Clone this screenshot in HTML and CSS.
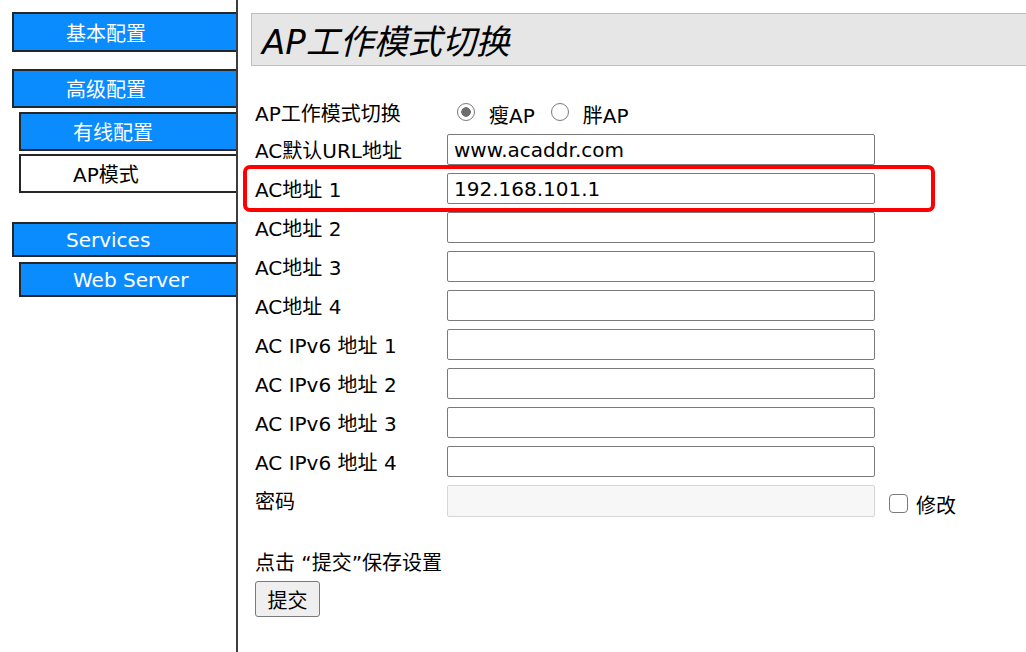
FILE: index.html
```html
<!DOCTYPE html>
<html lang="zh-CN">
<head>
<meta charset="utf-8">
<title>AP工作模式切换</title>
<link rel="stylesheet" href="styles.css">
</head>
<body>
<div class="page">
  <aside class="sidebar">
    <div class="nav-item nav-top nav-first">基本配置</div>
    <div class="nav-item nav-top nav-group">高级配置</div>
    <div class="nav-item nav-sub nav-s1">有线配置</div>
    <div class="nav-item nav-sub nav-active">AP模式</div>
    <div class="nav-item nav-top nav-short nav-svc">Services</div>
    <div class="nav-item nav-sub nav-short">Web Server</div>
  </aside>
  <main class="main">
    <h1 class="title">AP工作模式切换</h1>
    <form class="form">
      <div class="label label-radio">AP工作模式切换</div>
      <div class="radios">
        <label class="radio-opt"><input type="radio" name="mode" class="radio" checked><span>瘦AP</span></label>
        <label class="radio-opt"><input type="radio" name="mode" class="radio"><span>胖AP</span></label>
      </div>
      <div></div>

      <div class="label">AC默认URL地址</div>
      <input class="field" type="text" value="www.acaddr.com">
      <div></div>

      <div class="label">AC地址 1</div>
      <input class="field" type="text" value="192.168.101.1">
      <div></div>

      <div class="label">AC地址 2</div>
      <input class="field" type="text">
      <div></div>

      <div class="label">AC地址 3</div>
      <input class="field" type="text">
      <div></div>

      <div class="label">AC地址 4</div>
      <input class="field" type="text">
      <div></div>

      <div class="label">AC IPv6 地址 1</div>
      <input class="field" type="text">
      <div></div>

      <div class="label">AC IPv6 地址 2</div>
      <input class="field" type="text">
      <div></div>

      <div class="label">AC IPv6 地址 3</div>
      <input class="field" type="text">
      <div></div>

      <div class="label">AC IPv6 地址 4</div>
      <input class="field" type="text">
      <div></div>

      <div class="label">密码</div>
      <input class="field field-disabled" type="password" disabled>
      <label class="check-opt"><input type="checkbox" class="check"><span>修改</span></label>
    </form>
    <p class="hint">点击 “提交”保存设置</p>
    <button class="submit" type="button">提交</button>
  </main>
  <div class="highlight"></div>
</div>
</body>
</html>
```
FILE: styles.css
```css
* { box-sizing: border-box; }

html, body {
  margin: 0;
  padding: 0;
  background: #fff;
}

body {
  font-family: "DejaVu Sans", "Noto Sans CJK SC", sans-serif;
  font-size: 20px;
  color: #000;
}

.page {
  position: relative;
  display: flex;
  width: 1026px;
  height: 652px;
  overflow: hidden;
}

/* ---------- sidebar ---------- */
.sidebar {
  flex: 0 0 238px;
  display: flex;
  flex-direction: column;
  align-items: stretch;
  padding-top: 12px;
  border-right: 2px solid #3d3d3d;
}

.nav-item {
  height: 39px;
  display: flex;
  align-items: center;
  padding: 3px 0 0 52px;
  background: #0a8cff;
  color: #fff;
  border: 2px solid #262626;
  border-right: none;
  line-height: 1;
  white-space: nowrap;
}

.nav-top { margin-left: 12px; }
.nav-sub { margin-left: 19px; }

.nav-first { height: 40px; margin-bottom: 17px; }
.nav-group { margin-bottom: 4px; }
.nav-s1 { margin-bottom: 3px; }
.nav-active {
  background: #fff;
  color: #000;
  margin-bottom: 29px;
}
.nav-short { height: 35px; padding-top: 1px; }
.nav-svc { margin-bottom: 5px; }

/* ---------- main ---------- */
.main {
  flex: 1 1 auto;
  padding: 13px 0 0 13px;
  min-width: 0;
}

.title {
  margin: 0 -20px 0 0;
  height: 53px;
  display: flex;
  align-items: center;
  padding: 4px 0 0 10px;
  background: #e6e6e6;
  border: 1px solid #b5bfdc;
  font-size: 34px;
  font-weight: normal;
  font-style: italic;
  line-height: 1;
}

.form {
  display: grid;
  grid-template-columns: 192px 428px auto;
  grid-auto-rows: 31px;
  row-gap: 8px;
  margin: 29px 0 0 4px;
  align-items: center;
}

.label {
  line-height: 24px;
  padding-top: 3px;
  white-space: nowrap;
}

.label-radio { padding-top: 6px; }

.radios {
  display: flex;
  align-items: center;
  padding-top: 3px;
  padding-left: 10px;
  gap: 16px;
}

.radio-opt {
  display: flex;
  align-items: center;
  gap: 14px;
}

.radio-opt span { padding-top: 5px; }

.radio {
  appearance: none;
  -webkit-appearance: none;
  width: 18px;
  height: 18px;
  margin: 0;
  border: 1.5px solid #7a7a7a;
  border-radius: 50%;
  background: #fff;
  position: relative;
}

.radio:checked {
  background: radial-gradient(circle, #6e6e6e 0 4.5px, #fff 5px);
}

.field {
  width: 428px;
  height: 31px;
  margin: 0;
  padding: 1px 6px 0;
  border: 1px solid #7a7a7a;
  border-radius: 2px;
  font-family: "DejaVu Sans", "Noto Sans CJK SC", sans-serif;
  font-size: 20px;
  color: #000;
  background: #fff;
}

.field-disabled {
  height: 32px;
  background: #f7f7f7;
  border-color: #d6d6d6;
  align-self: start;
}

.check-opt {
  display: flex;
  align-items: center;
  gap: 8px;
  padding-left: 14px;
  padding-top: 6px;
}

.check-opt span { padding-top: 2px; }

.check {
  appearance: none;
  -webkit-appearance: none;
  width: 19px;
  height: 19px;
  margin: 0;
  border: 1.5px solid #7a7a7a;
  border-radius: 4px;
  background: #fff;
}

.hint {
  margin: 35px 0 0 4px;
  line-height: 24px;
}

.submit {
  margin: 6px 0 0 4px;
  width: 65px;
  height: 36px;
  padding: 0;
  background: #efefef;
  border: 1px solid #7a7a7a;
  border-radius: 3px;
  font-family: "DejaVu Sans", "Noto Sans CJK SC", sans-serif;
  font-size: 20px;
  color: #000;
}

/* annotation overlay */
.highlight {
  position: absolute;
  left: 243px;
  top: 165px;
  width: 692px;
  height: 47px;
  border: 4px solid #ff0000;
  border-radius: 7px;
  pointer-events: none;
}
```
